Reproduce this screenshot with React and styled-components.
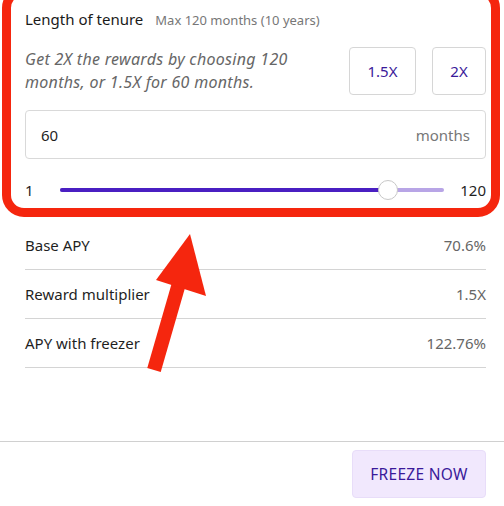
import React from 'react'
import styled, { createGlobalStyle } from 'styled-components'

const Global = createGlobalStyle`
  html, body { margin: 0; padding: 0; background: #fff; }
  body { font-family: "Noto Sans", "Open Sans", sans-serif; color: #1f1f1f; }
  *, *::before, *::after { box-sizing: border-box; }
`

const Page = styled.div`
  position: relative;
  width: 504px;
  height: 506px;
  overflow: hidden;
  display: flex;
  flex-direction: column;
`

const Content = styled.div`
  padding: 9px 18px 0 25px;
  display: flex;
  flex-direction: column;
  flex: 1;
`

const TitleRow = styled.div`
  display: flex;
  align-items: baseline;
  gap: 12px;
  height: 22px;
`

const Title = styled.span`
  font-size: 15px;
  color: #1a1a1a;
`

const Hint = styled.span`
  font-size: 13px;
  color: #777;
`

const PromoRow = styled.div`
  display: flex;
  align-items: center;
  margin-top: 16px;
  gap: 16px;
`

const Promo = styled.p`
  flex: 1;
  margin: 0;
  font-size: 16px;
  letter-spacing: 0.3px;
  font-style: italic;
  line-height: 23px;
  color: #666;
`

const Multiplier = styled.button`
  height: 48px;
  min-width: ${({ $w }) => $w}px;
  padding: 0;
  background: #fff;
  border: 1px solid #d6d6d6;
  border-radius: 4px;
  font-family: inherit;
  font-size: 15px;
  color: #3a1a9a;
`

const InputBox = styled.div`
  margin-top: 15px;
  height: 49px;
  border: 1px solid #d9d9d9;
  border-radius: 4px;
  display: flex;
  align-items: center;
  justify-content: space-between;
  padding: 0 15px;
  font-size: 15px;
`

const Value = styled.span`
  color: #1f1f1f;
`

const Unit = styled.span`
  color: #777;
`

const SliderRow = styled.div`
  display: flex;
  align-items: center;
  margin-top: 18px;
  height: 26px;
  font-size: 15px;
`

const Track = styled.div`
  position: relative;
  flex: 1;
  height: 4px;
  margin: 0 16px 0 26px;
  border-radius: 2px;
  background: #b8a5e6;
`

const Fill = styled.div`
  height: 100%;
  border-radius: 2px;
  background: #4a1fc2;
`

const Thumb = styled.div`
  position: absolute;
  top: 50%;
  width: 20px;
  height: 20px;
  margin: -10px 0 0 -10px;
  border-radius: 50%;
  background: #fff;
  border: 1px solid #c8c8c8;
`

const Rows = styled.div`
  margin-top: 18px;
  display: flex;
  flex-direction: column;
`

const Row = styled.div`
  height: 49px;
  display: flex;
  align-items: center;
  justify-content: space-between;
  border-bottom: 1px solid #d4d4d4;
  font-size: 15px;
`

const Label = styled.span`
  color: #1f1f1f;
`

const Amount = styled.span`
  color: #666;
`

const Footer = styled.div`
  border-top: 1px solid #d0d0d0;
  height: 65px;
  display: flex;
  justify-content: flex-end;
  align-items: flex-start;
  padding: 8px 18px 0 0;
`

const Freeze = styled.button`
  width: 134px;
  height: 48px;
  border: 1px solid #e8ddf9;
  border-radius: 4px;
  background: #f1e8fd;
  color: #3a1a9a;
  font-family: inherit;
  font-size: 15.5px;
  letter-spacing: 0.3px;
`

const Frame = styled.div`
  position: absolute;
  left: 2px;
  right: 4px;
  top: -14px;
  height: 231px;
  border: 9px solid #f5260e;
  border-radius: 22px;
  pointer-events: none;
`

const Arrow = styled.svg`
  position: absolute;
  left: 140px;
  top: 228px;
  pointer-events: none;
`

const rows = [
  ['Base APY', '70.6%'],
  ['Reward multiplier', '1.5X'],
  ['APY with freezer', '122.76%'],
]

export default function App() {
  const pct = 85.5
  return (
    <Page>
      <Global />
      <Content>
        <TitleRow>
          <Title>Length of tenure</Title>
          <Hint>Max 120 months (10 years)</Hint>
        </TitleRow>
        <PromoRow>
          <Promo>Get 2X the rewards by choosing 120 months, or 1.5X for 60 months.</Promo>
          <Multiplier $w={67}>1.5X</Multiplier>
          <Multiplier $w={54}>2X</Multiplier>
        </PromoRow>
        <InputBox>
          <Value>60</Value>
          <Unit>months</Unit>
        </InputBox>
        <SliderRow>
          <span>1</span>
          <Track>
            <Fill style={{ width: `${pct}%` }} />
            <Thumb style={{ left: `${pct}%` }} />
          </Track>
          <span>120</span>
        </SliderRow>
        <Rows>
          {rows.map(([l, v]) => (
            <Row key={l}>
              <Label>{l}</Label>
              <Amount>{v}</Amount>
            </Row>
          ))}
        </Rows>
      </Content>
      <Footer>
        <Freeze>FREEZE NOW</Freeze>
      </Footer>
      <Frame />
      <Arrow width="70" height="150" viewBox="0 0 70 150">
        <line x1="14" y1="142" x2="42" y2="45" stroke="#f5260e" strokeWidth="14" />
        <polygon points="50,6 66,68 16,52" fill="#f5260e" />
      </Arrow>
    </Page>
  )
}
